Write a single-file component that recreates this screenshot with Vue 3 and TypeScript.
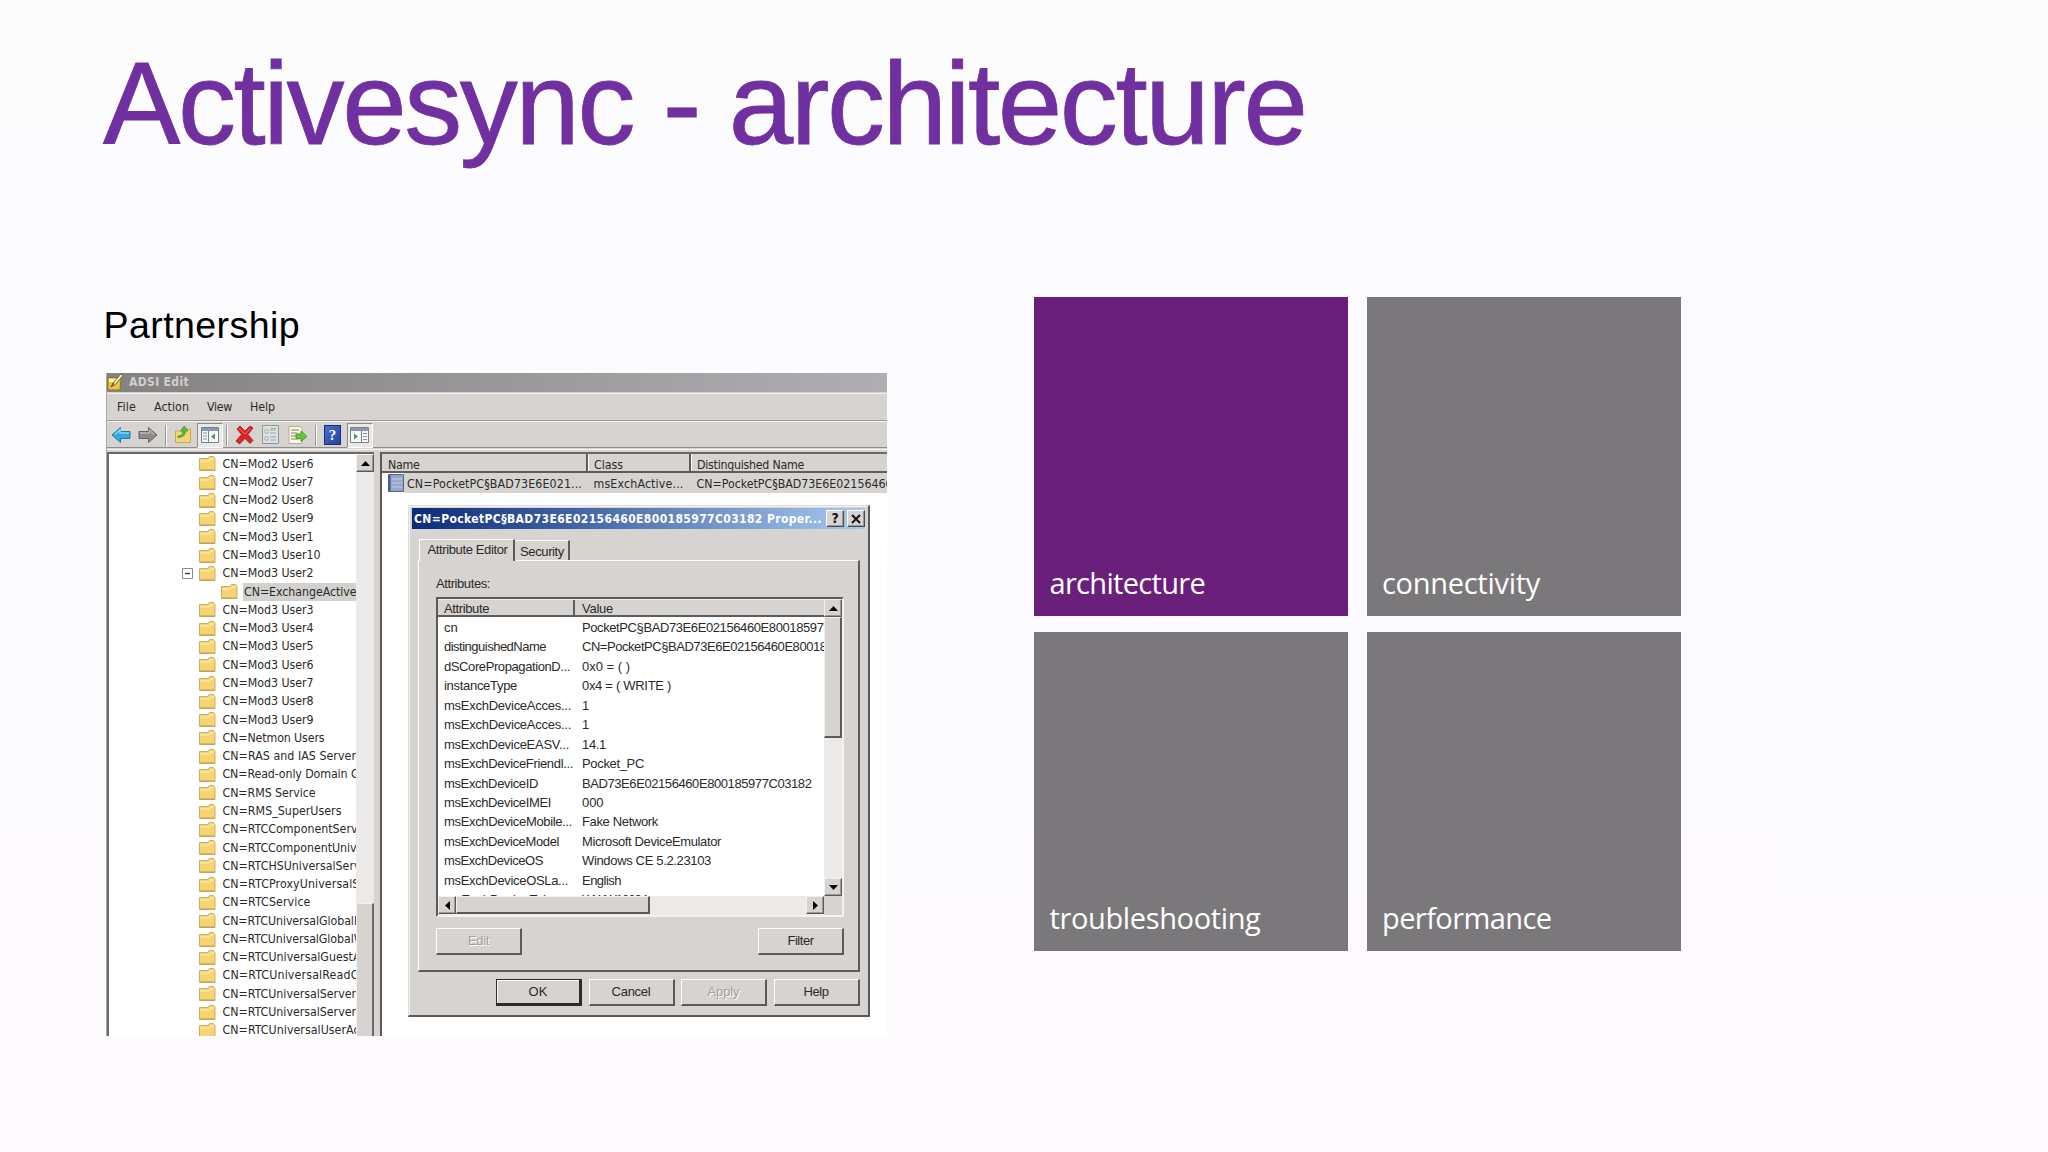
<script setup lang="ts">
import type { Directive } from 'vue'

interface TreeNode { label: string; width?: number; child?: boolean; open?: boolean }
interface Attr { name: string; value: string; nw?: number; vw?: number }

/** Tracks a label in or out so that it takes up the given width. */
const vFit: Directive<HTMLElement, number | undefined> = {
  mounted(el, { value }) {
    if (!value) return
    const count = (el.textContent ?? '').length
    el.style.letterSpacing = '0px'
    const range = document.createRange()
    range.selectNodeContents(el)
    const natural = range.getBoundingClientRect().width
    el.style.letterSpacing = `${(value - natural) / count}px`
  },
}

const menu = [
  { label: 'File', width: 19 },
  { label: 'Action', width: 35 },
  { label: 'View', width: 25 },
  { label: 'Help', width: 25 },
]

const nodes: TreeNode[] = [
  ...['6', '7', '8', '9'].map((n) => ({ label: `CN=Mod2 User${n}`, width: 91 })),
  { label: 'CN=Mod3 User1', width: 91 },
  { label: 'CN=Mod3 User10', width: 98 },
  { label: 'CN=Mod3 User2', width: 91, open: true },
  { label: 'CN=ExchangeActive', width: 112.5, child: true },
  ...['3', '4', '5', '6', '7', '8', '9'].map((n) => ({ label: `CN=Mod3 User${n}`, width: 91 })),
  { label: 'CN=Netmon Users', width: 102 },
  { label: 'CN=RAS and IAS Server', width: 133.5 },
  { label: 'CN=Read-only Domain C', width: 136 },
  { label: 'CN=RMS Service', width: 93 },
  { label: 'CN=RMS_SuperUsers', width: 119 },
  { label: 'CN=RTCComponentServ', width: 135 },
  { label: 'CN=RTCComponentUniv', width: 134 },
  { label: 'CN=RTCHSUniversalServ', width: 138 },
  { label: 'CN=RTCProxyUniversalS', width: 137 },
  { label: 'CN=RTCService', width: 88 },
  { label: 'CN=RTCUniversalGlobalR', width: 139 },
  { label: 'CN=RTCUniversalGlobalW', width: 142 },
  { label: 'CN=RTCUniversalGuestA', width: 138 },
  { label: 'CN=RTCUniversalReadO', width: 137 },
  { label: 'CN=RTCUniversalServer', width: 133.5 },
  { label: 'CN=RTCUniversalServer', width: 133.5 },
  { label: 'CN=RTCUniversalUserAd', width: 138 },
]

const attrs: Attr[] = [
  { name: 'cn', value: 'PocketPC§BAD73E6E02156460E80018597', nw: 13.5, vw: 241.5 },
  { name: 'distinguishedName', value: 'CN=PocketPC§BAD73E6E02156460E80018', nw: 102, vw: 244.5 },
  { name: 'dSCorePropagationD...', value: '0x0 = ( )', nw: 126, vw: 48 },
  { name: 'instanceType', value: '0x4 = ( WRITE )', nw: 73, vw: 89 },
  { name: 'msExchDeviceAcces...', value: '1', nw: 127 },
  { name: 'msExchDeviceAcces...', value: '1', nw: 127 },
  { name: 'msExchDeviceEASV...', value: '14.1', nw: 125, vw: 24 },
  { name: 'msExchDeviceFriendl...', value: 'Pocket_PC', nw: 129, vw: 62 },
  { name: 'msExchDeviceID', value: 'BAD73E6E02156460E800185977C03182', nw: 94, vw: 229.5 },
  { name: 'msExchDeviceIMEI', value: '000', nw: 107, vw: 21.5 },
  { name: 'msExchDeviceMobile...', value: 'Fake Network', nw: 128, vw: 76 },
  { name: 'msExchDeviceModel', value: 'Microsoft DeviceEmulator', nw: 115, vw: 139 },
  { name: 'msExchDeviceOS', value: 'Windows CE 5.2.23103', nw: 99, vw: 129 },
  { name: 'msExchDeviceOSLa...', value: 'English', nw: 124, vw: 39 },
  { name: 'msExchDeviceTelep...', value: 'WWW12204', nw: 127, vw: 65 },
]

const tiles = [
  { label: 'architecture', width: 155.5, active: true },
  { label: 'connectivity', width: 158 },
  { label: 'troubleshooting', width: 211 },
  { label: 'performance', width: 169.5 },
]

const buttons = [
  { label: 'OK', width: 19, kind: 'default' },
  { label: 'Cancel', width: 39, kind: '' },
  { label: 'Apply', width: 32, kind: 'off' },
  { label: 'Help', width: 25, kind: '' },
]
</script>

<template>
  <div class="slide">
    <h1><span v-fit="1202.500">Activesync - architecture</span></h1>
    <div class="content">
      <section class="left">
        <h2><span v-fit="196.500">Partnership</span></h2>
        <div class="window">
          <div class="caption">
            <svg width="18" height="17" viewBox="0 0 18 17">
              <path d="M1 3.500h13l-1 12.500H1z" fill="#e9c63f" stroke="#8a762c" />
              <path d="M2 5h9v3H2z" fill="#fff3b0" />
              <path d="M16 1.500 8 11l-3 1 1-3L14 0z" fill="#f8f2d8" stroke="#6d6338" />
              <path d="m4 13 3-4" stroke="#6d6338" stroke-width="1.500" />
            </svg>
            <span v-fit="60">ADSI Edit</span>
          </div>
          <div class="menubar">
            <span v-for="m in menu" :key="m.label" v-fit="m.width">{{ m.label }}</span>
          </div>
          <div class="toolbar">
            <svg class="t-back" width="20" height="18" viewBox="0 0 20 18">
              <path d="M1 9 9.500 1.500v4H19v7H9.500v4z" fill="#35a8e2" stroke="#2378ad" />
              <path d="M4 8.500 9 4v3h9" fill="none" stroke="#8ad5f5" stroke-width="1.500" />
            </svg>
            <svg class="t-fwd" width="20" height="18" viewBox="0 0 20 18">
              <path d="M19 9 10.500 1.500v4H1v7h9.500v4z" fill="#8d8c8c" stroke="#636262" />
              <path d="M2 7h9.500V4L16 8.500" fill="none" stroke="#b5b3b3" stroke-width="1.300" />
            </svg>
            <i class="sep s1"></i>
            <svg class="t-up" width="18" height="20" viewBox="0 0 18 20">
              <path d="M1.500 6h9l2-2h4v13.500h-15z" fill="#f3d477" stroke="#c9a74d" />
              <path d="M4 11c3 0 5-2 5-5H6.500l3.700-5L14 6h-2.300c0 4-3 6.500-7.700 6.500z" fill="#55bb3a" stroke="#3c8b2c" stroke-width=".7" />
            </svg>
            <div class="pressed p1">
              <svg width="18" height="16" viewBox="0 0 18 16">
                <path d="M.5.500h17v15H.500z" fill="#f7f7f8" stroke="#7b828e" />
                <path d="M1 1h16v3H1z" fill="#8997b0" />
                <path d="M2 6h4M2 9h4M2 12h4" stroke="#8292a8" />
                <path d="M7.500 4v12" stroke="#7b828e" />
                <path d="M14 6.500v6l-4-3z" fill="#4c9552" />
              </svg>
            </div>
            <i class="sep s2"></i>
            <svg class="t-del" width="20" height="20" viewBox="0 0 20 20">
              <path d="m2 4 3-3 5 5 5-5 3 2-5 6.500 5 6-3 3-5-5-5.500 5.500L1 16l5.500-6.500z" fill="#d92429" stroke="#a51a1e" stroke-width=".8" />
              <path d="m4 3.500 6 5.500 5.500-5.500" fill="none" stroke="#ef7471" />
            </svg>
            <svg class="t-prop" width="18" height="20" viewBox="0 0 18 20">
              <path d="M.5.500h16v18H.500z" fill="#dce1e0" stroke="#8d9799" />
              <path d="M3 5h3v3H3zm0 7h3v3H3z" fill="#fff" stroke="#9aa8ac" />
              <path d="M8 5h6M8 8h6M8 12h6M8 15h6M9 3.500h5" stroke="#9caab0" />
            </svg>
            <svg class="t-exp" width="20" height="18" viewBox="0 0 20 18">
              <path d="M1 .5h11l2 2v15H1z" fill="#fafae8" stroke="#b6af8f" />
              <path d="M3 4h8M3 7h6M3 10h5M3 13h8" stroke="#827e68" />
              <path d="M8 8h5V5l6 5.500-6 5v-3H8z" fill="#69c53d" stroke="#489e2b" />
            </svg>
            <i class="sep s3"></i>
            <div class="t-help">?</div>
            <div class="pressed p2">
              <svg width="19" height="16" viewBox="0 0 19 16">
                <path d="M.5.500h18v15H.500z" fill="#f7f7f8" stroke="#7b828e" />
                <path d="M1 1h17v3H1z" fill="#8997b0" />
                <path d="M13 6.500h4M13 9.500h4M13 12.500h4" stroke="#8292a8" />
                <path d="M11.500 4v12" stroke="#7b828e" />
                <path d="M4 6.500v6l4-3z" fill="#4c9552" />
              </svg>
            </div>
          </div>
          <div class="panes">
            <div class="tree">
              <div class="nodes">
                <div v-for="(n, i) in nodes" :key="i" class="node" :class="{ child: n.child }">
                  <span class="toggle"><svg v-if="n.open" width="11" height="11" viewBox="0 0 11 11"><path d="M.5.500h10v10H.500z" fill="#fff" stroke="#8d8a88" /><path d="M3 5.500h5" stroke="#333" stroke-width="1.300" /></svg></span>
                  <svg class="folder" width="17" height="15" viewBox="0 0 17 15">
                    <path d="M.5 2.500h8l2-2h4l1.500 2v12H.500z" fill="#f6d474" stroke="#c5a75a" stroke-width=".9" />
                    <path d="M1.500 5h8.500l2-2h3" fill="none" stroke="#fdf0b8" />
                    <path d="M1 14h15" stroke="#c29b49" />
                  </svg>
                  <span class="text" v-fit="n.width">{{ n.label }}</span>
                </div>
              </div>
              <div class="vscroll">
                <div class="sbtn"><svg width="9" height="5" viewBox="0 0 9 5"><path d="M4.500 0 9 5H0z" /></svg></div>
                <div class="thumb"></div>
              </div>
            </div>
            <div class="list">
              <div class="lhead">
                <div class="c1"><span v-fit="31.500">Name</span></div>
                <div class="c2"><span v-fit="29">Class</span></div>
                <div class="c3"><span v-fit="107">Distinguished Name</span></div>
              </div>
              <div class="lrow">
                <svg width="16" height="18" viewBox="0 0 16 18">
                  <path d="M.5.500h15v17H.500z" fill="#95a7cd" stroke="#53658e" />
                  <path d="M1.500 1v16" stroke="#49597f" stroke-width="2" />
                  <path d="M4 5h10M4 9h10M4 13h10" stroke="#bfcbe2" />
                </svg>
                <div class="c1"><span v-fit="175">CN=PocketPC§BAD73E6E021...</span></div>
                <div class="c2"><span v-fit="90">msExchActive...</span></div>
                <div class="c3"><span v-fit="196">CN=PocketPC§BAD73E6E02156460</span></div>
              </div>
            </div>
          </div>

          <div class="dialog">
            <div class="dcap">
              <span v-fit="408">CN=PocketPC§BAD73E6E02156460E800185977C03182 Proper...</span>
              <div class="dbtn">?</div>
              <div class="dbtn x"><svg width="10" height="10" viewBox="0 0 10 10"><path d="m1 1 8 8M9 1 1 9" stroke="#111" stroke-width="2" /></svg></div>
            </div>
            <div class="tabs">
              <div class="tab on"><span v-fit="80">Attribute Editor</span></div>
              <div class="tab"><span v-fit="44">Security</span></div>
            </div>
            <div class="page">
              <div class="alabel"><span v-fit="54">Attributes:</span></div>
              <div class="grid">
                <div class="gmain">
                  <div class="ghead">
                    <div class="g1"><span v-fit="45">Attribute</span></div>
                    <div class="g2"><span v-fit="31">Value</span></div>
                  </div>
                  <div class="gbody">
                    <div v-for="(a, i) in attrs" :key="i" class="grow">
                      <div class="g1"><span v-fit="a.nw">{{ a.name }}</span></div>
                      <div class="g2"><span v-fit="a.vw">{{ a.value }}</span></div>
                    </div>
                  </div>
                </div>
                <div class="gvs">
                  <div class="sbtn"><svg width="9" height="5" viewBox="0 0 9 5"><path d="M4.500 0 9 5H0z" /></svg></div>
                  <div class="gthumb"></div>
                  <div class="sbtn down"><svg width="9" height="5" viewBox="0 0 9 5"><path d="M4.500 5 9 0H0z" /></svg></div>
                </div>
                <div class="ghs">
                  <div class="sbtn"><svg width="5" height="9" viewBox="0 0 5 9"><path d="M0 4.500 5 0v9z" /></svg></div>
                  <div class="hthumb"></div>
                  <div class="sbtn right"><svg width="5" height="9" viewBox="0 0 5 9"><path d="M5 4.500 0 0v9z" /></svg></div>
                </div>
                <div class="corner"></div>
              </div>
              <div class="pbtns">
                <div class="btn off"><span v-fit="21">Edit</span></div>
                <div class="btn"><span v-fit="26">Filter</span></div>
              </div>
            </div>
            <div class="dbtns">
              <div v-for="b in buttons" :key="b.label" class="btn" :class="b.kind"><span v-fit="b.width">{{ b.label }}</span></div>
            </div>
          </div>
        </div>
      </section>
      <nav class="tiles">
        <div v-for="t in tiles" :key="t.label" class="tile" :class="{ active: t.active }">
          <span v-fit="t.width">{{ t.label }}</span>
        </div>
      </nav>
    </div>
  </div>
</template>

<style>
body { margin: 0; }
</style>

<style scoped>
* { box-sizing: border-box; }
.slide {
  width: 2048px;
  height: 1152px;
  overflow: hidden;
  background: linear-gradient(#fcfcfc, #fcfbfd 140px, #fcfafd);
  padding-top: 37px;
  font-family: "Liberation Sans", Arial, sans-serif;
}
svg { display: block; flex: none; }
span { white-space: pre; }
h1, h2 { margin: 0; font-weight: 400; }
h1 {
  padding-left: 103px;
  height: 260px;
  font-size: 116px;
  line-height: 134px;
  color: #7030a0;
  -webkit-text-stroke: 0.800px #7030a0;
}
.content { display: flex; align-items: flex-start; }
.left { margin-left: 106px; width: 781px; }
h2 {
  height: 76px;
  padding-top: 5.500px;
  margin-left: -2.500px;
  font-size: 37.600px;
  line-height: 44px;
  color: #000;
}
.tiles {
  margin-left: 147px;
  display: grid;
  grid-template-columns: 314px 314px;
  grid-auto-rows: 318.500px;
  gap: 16.500px 18.500px;
}
.tile {
  background: #7b787b;
  color: #fff;
  display: flex;
  align-items: flex-end;
  padding: 0 0 13px 15.500px;
  font: 29px/40px "Open Sans", "Noto Sans", sans-serif;
}
.tile.active { background: #6a1f7a; }

.window {
  position: relative;
  height: 663px;
  overflow: hidden;
  background: #d6d3d0;
  border-left: 1px solid #aaa7a6;
  color: #2b2a2a;
  font-family: "DejaVu Sans Condensed", "DejaVu Sans", Tahoma, sans-serif;
  font-stretch: condensed;
  font-size: 12.300px;
}
.caption {
  display: flex;
  align-items: center;
  gap: 4px;
  height: 19px;
  padding: 0 0 1px;
  background: linear-gradient(90deg, #848183, #b0aeb0);
  color: #d2cfcd;
  font-weight: 700;
  font-size: 12px;
}
.menubar {
  height: 28px;
  margin-top: 1px;
  border-top: 1.500px solid #f1efed;
  border-bottom: 1px solid #999694;
  display: flex;
  gap: 18px;
  padding-left: 10px;
  line-height: 27.500px;
}
.toolbar {
  height: 27px;
  border-top: 1.500px solid #f4f2f0;
  border-bottom: 1px solid #8f8c8a;
  display: flex;
  align-items: center;
  padding: 1px 0 0 4px;
}
.t-fwd { margin-left: 6.500px; }
.sep { width: 2px; height: 21px; background: #9a9795; border-right: 1px solid #fff; flex: none; }
.s1 { margin-left: 7px; }
.t-up { margin-left: 7px; }
.pressed {
  width: 26px;
  height: 25px;
  background: #ebe9e8;
  border: 1px solid;
  border-color: #8d8a88 #fff #fff #8d8a88;
  display: flex;
  align-items: center;
  justify-content: center;
}
.p1 { margin-left: 5.500px; }
.s2 { margin-left: 3px; }
.t-del { margin-left: 6.500px; }
.t-prop { margin-left: 7px; }
.t-exp { margin-left: 8.500px; }
.s3 { margin-left: 7px; }
.t-help {
  margin-left: 7px;
  width: 17px;
  height: 20px;
  background: linear-gradient(135deg, #4a6fd0, #2343a0);
  border: 1px solid #1c2f75;
  color: #fff;
  font: 700 15px/18px "Liberation Serif", serif;
  text-align: center;
}
.p2 { margin-left: 5.500px; }

.panes {
  display: flex;
  height: 587px;
  margin-top: 1px;
  border-top: 1.500px solid #f6f4f2;
  padding-top: 2px;
}
.tree {
  display: flex;
  width: 267px;
  border-left: 2px solid #6b6967;
  border-top: 2px solid #6b6967;
  background: #fff;
}
.nodes { width: 247px; padding-top: 0.600px; overflow: hidden; }
.node { display: flex; align-items: center; height: 18.290px; line-height: 18.290px; }
.toggle { width: 17px; margin-left: 73px; flex: none; }
.folder { margin-right: 6px; }
.child .toggle { width: 39px; }
.text { padding-left: 0.500px; }
.child .text { background: #d3d1ce; margin-left: -1px; padding-left: 1px; }
.vscroll { width: 18px; background: #ebeae9; position: relative; }
.sbtn {
  width: 18px;
  height: 18px;
  background: #d6d3d0;
  border: 1px solid;
  border-color: #f3f1ef #5c5a58 #5c5a58 #f3f1ef;
  box-shadow: inset -1px -1px #9b9896;
  display: flex;
  align-items: center;
  justify-content: center;
}
.thumb {
  margin-top: 431px;
  height: 140px;
  background: #d6d3d0;
  border: 1px solid #f3f1ef;
  border-right: 2px solid #6b6967;
}
.list {
  flex: 1;
  min-width: 0;
  margin-left: 6px;
  border-left: 2px solid #5c5a58;
  border-top: 2px solid #6b6967;
  background: #fff;
}
.lhead, .lrow { display: flex; overflow: hidden; }
.lhead { height: 19px; background: #d6d3d0; border-bottom: 2px solid #5f5d5b; line-height: 22px; }
.lhead > div { border-right: 2px solid #5f5d5b; padding-left: 6px; }
.lhead .c1 { width: 206px; }
.lhead .c2 { width: 103px; }
.lhead .c3 { flex: 1; border: 0; }
.lhead > div + div { box-shadow: inset 1px 0 #fff; }
.lrow { height: 20px; padding-left: 6px; align-items: center; line-height: 20px; background: linear-gradient(90deg, #fff 22px, #d6d3d0 22px); }
.lrow > div { padding-top: 1.500px; }
.lrow .c1 { flex: none; width: 189.500px; padding-left: 3px; }
.lrow .c2 { width: 103px; flex: none; }

.dialog {
  position: absolute;
  left: 301px;
  top: 132px;
  width: 462px;
  height: 512px;
  background: #d6d3d0;
  border: 1px solid;
  border-color: #dedbd8 #5c5a58 #5c5a58 #dedbd8;
  border-right-width: 2px;
  border-bottom-width: 2px;
  box-shadow: inset 1px 1px #f5f3f1;
  padding: 2px 3px 0 3px;
  font-family: "Liberation Sans", Arial, sans-serif;
  font-stretch: normal;
  font-size: 13px;
  letter-spacing: -0.450px;
}
.dcap {
  height: 21px;
  display: flex;
  align-items: center;
  padding-left: 2px;
  background: linear-gradient(90deg, #0b2a7a, #a6caf0);
  color: #fff;
  font-family: "DejaVu Sans Condensed", "DejaVu Sans", sans-serif;
  font-stretch: condensed;
  font-weight: 700;
  font-size: 12px;
}
.dcap span { width: 412px; }
.dbtn {
  width: 18px;
  height: 17px;
  flex: none;
  background: #d6d3d0;
  border: 1px solid;
  border-color: #fff #4e4c4a #4e4c4a #fff;
  box-shadow: inset -1px -1px #9b9896;
  color: #111;
  font-size: 14px;
  line-height: 15px;
  text-align: center;
}
.dbtn.x { margin-left: 3px; display: flex; align-items: center; justify-content: center; }
.tabs { display: flex; align-items: flex-end; height: 31px; padding-left: 7px; }
.tab {
  height: 20px;
  width: 56px;
  padding-left: 6px;
  line-height: 21px;
  border-top: 1px solid #fff;
  border-right: 2px solid #5c5a58;
}
.tab.on {
  height: 22px;
  width: 96px;
  padding-left: 7.500px;
  line-height: 19px;
  border-left: 1px solid #fff;
  position: relative;
  z-index: 1;
  margin-bottom: -1px;
  background: #d6d3d0;
}
.tab:last-child { padding-left: 5px; width: 55px; }
.page {
  margin-left: 6px;
  width: 442px;
  height: 412px;
  border: 1px solid #fff;
  border-right: 2px solid #5c5a58;
  border-bottom: 2px solid #5c5a58;
  padding: 13px 0 0 17px;
}
.alabel { height: 23px; line-height: 20px; }
.grid {
  width: 408px;
  height: 320px;
  border: 2px solid;
  border-color: #5c5a58 #f5f3f1 #f5f3f1 #5c5a58;
  display: grid;
  grid-template-columns: 386px 18px;
  grid-template-rows: 297px 19px;
}
.gmain { background: #fff; overflow: hidden; }
.ghead { display: flex; height: 18px; background: #d6d3d0; border-bottom: 2px solid #5f5d5b; border-top: 1px solid #f3f1ef; line-height: 17px; }
.ghead .g1 { width: 137px; padding-left: 6px; border-right: 2px solid #5f5d5b; }
.ghead .g2 { padding-left: 7px; }
.gbody { padding-top: 1px; }
.grow { display: flex; height: 19.440px; line-height: 19.440px; padding-left: 6px; }
.grow .g1 { width: 138px; flex: none; }
.gvs { display: flex; flex-direction: column; background: #ebeae9; }
.gthumb { height: 121px; background: #d6d3d0; border: 1px solid #f3f1ef; border-right: 2px solid #5c5a58; border-bottom: 2px solid #5c5a58; }
.down { margin-top: auto; }
.ghs { display: flex; background: #ebeae9; }
.hthumb { width: 194px; height: 18px; background: #d6d3d0; border: 1px solid #f3f1ef; border-right: 2px solid #5c5a58; border-bottom: 2px solid #5c5a58; }
.right { margin-left: auto; }
.corner { background: #d6d3d0; }
.pbtns { display: flex; justify-content: space-between; width: 408px; margin-top: 11px; }
.btn {
  width: 86px;
  height: 27px;
  border: 1px solid;
  border-color: #fff #5c5a58 #5c5a58 #fff;
  border-right-width: 2px;
  border-bottom-width: 2px;
  line-height: 24px;
  text-align: center;
}
.btn.off { color: #a19e9b; text-shadow: 1px 1px #fff; }
.btn.default { border: 1.500px solid #2d2c2b; border-right-width: 3px; border-bottom-width: 3px; box-shadow: inset 1px 1px #fff; line-height: 23px; }
.dbtns { display: flex; gap: 6.500px; margin: 6.500px 0 0 84px; }
</style>
